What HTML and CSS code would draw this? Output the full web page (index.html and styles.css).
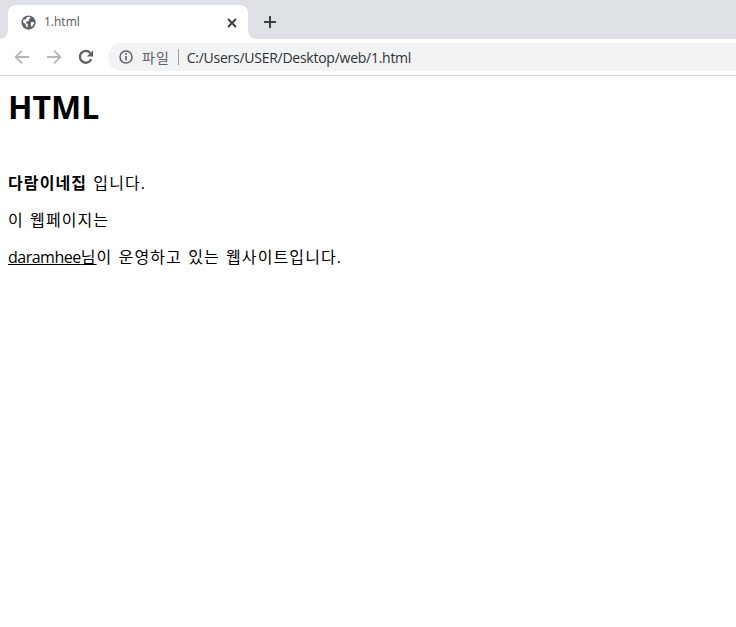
FILE: index.html
```html
<!DOCTYPE html>
<html lang="ko">
<head>
<meta charset="utf-8">
<title>1.html</title>
<link rel="stylesheet" href="styles.css">
</head>
<body>
<header class="chrome">
  <div class="tabstrip">
    <div class="tab">
      <svg class="favicon" width="15" height="15" viewBox="0 0 16 16"><circle cx="8" cy="8" r="7.6" fill="#5f6368"/><path d="M2.4 5.4 5 4.6 6.2 2.4 9 1.8 10.4 3 8.4 4.8 8 6.6 5.8 7 5.4 8.6 7.4 10.2 6.8 13.4 5.4 12.4 4.8 9.6 2.2 7.6Z" fill="#fff"/><path d="M10.6 7.6 13.6 7.4 13.8 9 12.4 11.6 10.8 12.6 10.4 10Z" fill="#fff"/></svg>
      <span class="tab-title">1.html</span>
      <svg class="tab-close" width="10" height="10" viewBox="0 0 10 10"><path d="M1 1 9 9M9 1 1 9" stroke="#3c4043" stroke-width="2" fill="none"/></svg>
    </div>
    <svg class="new-tab" width="12" height="12" viewBox="0 0 12 12"><path d="M6 0V12M0 6H12" stroke="#3c4043" stroke-width="2" fill="none"/></svg>
  </div>
  <div class="toolbar">
    <svg class="nav" width="16" height="16" viewBox="0 0 16 16"><path d="M15 8H2M8 1.6 1.6 8 8 14.4" stroke="#b4b6b9" stroke-width="1.8" fill="none"/></svg>
    <svg class="nav" width="16" height="16" viewBox="0 0 16 16"><path d="M1 8H14M8 1.6 14.4 8 8 14.4" stroke="#b4b6b9" stroke-width="1.8" fill="none"/></svg>
    <svg class="nav" width="16" height="16" viewBox="0 0 16 16"><path d="M13.2 10.2A5.9 5.9 0 1 1 12.2 3.9" stroke="#5f6368" stroke-width="2.3" fill="none"/><path d="M15 1.2V7.4H8.8Z" fill="#5f6368"/></svg>
    <div class="omnibox">
      <svg class="info" width="14" height="14" viewBox="0 0 14 14"><circle cx="7" cy="7" r="6" fill="none" stroke="#5f6368" stroke-width="1.5"/><path d="M7 6V10.6" stroke="#5f6368" stroke-width="1.6"/><circle cx="7" cy="4.1" r="1" fill="#5f6368"/></svg>
      <span class="scheme">파일</span>
      <span class="sep"></span>
      <span class="url">C:/Users/USER/Desktop/web/1.html</span>
    </div>
  </div>
</header>
<main class="page">
  <h1>HTML</h1>
  <p><strong>다람이네집</strong> 입니다.</p>
  <p>이 웹페이지는</p>
  <p><a href="#"><span class="latin">daramhee</span>님</a>이 운영하고 있는 웹사이트입니다.</p>
</main>
</body>
</html>
```
FILE: styles.css
```css
html, body {
  margin: 0;
  padding: 0;
  background: #fff;
}
body {
  font-family: "Open Sans", "Noto Sans CJK KR", sans-serif;
  color: #000;
  overflow: hidden;
}
.chrome {
  display: flex;
  flex-direction: column;
}
.tabstrip {
  height: 39px;
  background: #dee1e6;
  display: flex;
  align-items: flex-end;
  padding-left: 8px;
  box-sizing: border-box;
}
.tab {
  position: relative;
  width: 240px;
  height: 34px;
  box-sizing: border-box;
  background: #fff;
  border-radius: 8px 8px 0 0;
  display: flex;
  align-items: center;
  padding: 0 11px 0 13px;
}
.tab::before,
.tab::after {
  content: "";
  position: absolute;
  bottom: 0;
  width: 8px;
  height: 8px;
}
.tab::before {
  left: -8px;
  background: radial-gradient(circle at 0 0, transparent 7.5px, #fff 8px);
}
.tab::after {
  right: -8px;
  background: radial-gradient(circle at 100% 0, transparent 7.5px, #fff 8px);
}
.favicon {
  flex: none;
}
.tab-title {
  margin-left: 8px;
  flex: 1;
  font-size: 12px;
  line-height: 16px;
  color: #55585c;
}
.tab-close {
  flex: none;
  margin-top: 1px;
}
.new-tab {
  margin: 0 0 11px 16px;
}
.toolbar {
  height: 37px;
  box-sizing: border-box;
  background: #fff;
  border-bottom: 1px solid #d3d5d8;
  display: flex;
  align-items: center;
  padding-left: 14px;
}
.nav {
  flex: none;
  margin-right: 16px;
}
.omnibox {
  flex: 1;
  height: 28px;
  margin-left: -2px;
  background: #f1f3f4;
  border-radius: 14px 0 0 14px;
  display: flex;
  align-items: center;
  padding-left: 11px;
}
.info {
  flex: none;
}
.scheme {
  margin-left: 9px;
  font-size: 14px;
  letter-spacing: 1px;
  color: #5f6368;
}
.sep {
  width: 1px;
  height: 16px;
  margin: 0 8px 0 8px;
  background: #9aa0a6;
}
.url {
  font-size: 14px;
  letter-spacing: -0.26px;
  color: #303134;
}
.page {
  padding: 0 8px;
}
h1 {
  margin: 9px 0 44px;
  font-size: 32px;
  line-height: 44px;
  font-weight: 700;
}
p {
  margin: 16px 0;
  font-size: 16px;
  line-height: 21px;
  letter-spacing: 1.1px;
  word-spacing: 1px;
}
a {
  color: inherit;
}
.latin {
  letter-spacing: -0.5px;
}
```
